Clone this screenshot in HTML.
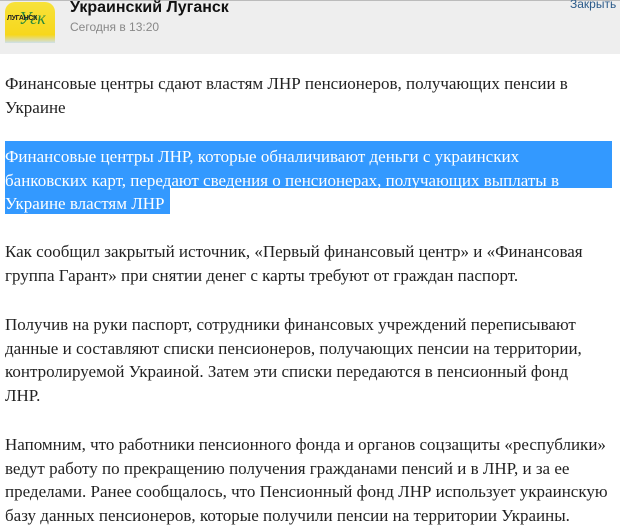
<!DOCTYPE html>
<html><head><meta charset="utf-8"><style>
body{margin:0;width:620px;height:532px;overflow:hidden;background:#fff;position:relative}
.hdr{position:absolute;left:0;top:0;width:620px;height:54px;background:#eeeeee;border-top:1px solid #bbb;box-sizing:border-box}
.logo{position:absolute;left:5px;top:2px;width:50px;height:41px;background:linear-gradient(#f7e23a 0,#f7d71c 80%,#cfe0ea 100%);border-radius:10px 10px 0 0;overflow:hidden}
.logo .t{position:absolute;left:2px;top:13px;font:bold 7px "Liberation Sans",sans-serif;color:#222;letter-spacing:-0.3px}
.logo .s{position:absolute;left:14px;top:6px;font:italic 18px "Liberation Serif",serif;color:#2a8a3a}
.name{position:absolute;left:70px;top:-1px;font:bold 16px "Liberation Sans",sans-serif;color:#111}
.date{position:absolute;left:70px;top:20px;font:12px "Liberation Sans",sans-serif;color:#888}
.close{position:absolute;left:570px;top:-3px;font:12px "Liberation Sans",sans-serif;color:#2a5a8a}
.p{position:absolute;left:5px;font:17px "Liberation Serif",serif;line-height:23.5px;color:#222;white-space:nowrap}
.hl1{position:absolute;left:5px;top:141px;width:607px;height:47px;background:#3399ff}
.hl2{position:absolute;left:5px;top:188px;width:165px;height:26px;background:#3399ff}
.w{color:#fff}
</style></head><body>
<div class="hdr"></div>
<div class="logo"><span class="s">Угк</span><span class="t">ЛУГАНСК</span></div>
<div class="name">Украинский Луганск</div>
<div class="date">Сегодня в 13:20</div>
<div class="close">Закрыть</div>
<div class="hl1"></div><div class="hl2"></div>
<div class="p" style="top:72px">Финансовые центры сдают властям ЛНР пенсионеров, получающих пенсии в<br>Украине</div>
<div class="p w" style="top:145px">Финансовые центры ЛНР, которые обналичивают деньги с украинских<br>банковских карт, передают сведения о пенсионерах, получающих выплаты в<br>Украине властям ЛНР</div>
<div class="p" style="top:240px">Как сообщил закрытый источник, «Первый финансовый центр» и «Финансовая<br>группа Гарант» при снятии денег с карты требуют от граждан паспорт.</div>
<div class="p" style="top:313px">Получив на руки паспорт, сотрудники финансовых учреждений переписывают<br>данные и составляют списки пенсионеров, получающих пенсии на территории,<br>контролируемой Украиной. Затем эти списки передаются в пенсионный фонд<br>ЛНР.</div>
<div class="p" style="top:433px">Напомним, что работники пенсионного фонда и органов соцзащиты «республики»<br>ведут работу по прекращению получения гражданами пенсий и в ЛНР, и за ее<br>пределами. Ранее сообщалось, что Пенсионный фонд ЛНР использует украинскую<br>базу данных пенсионеров, которые получили пенсии на территории Украины.</div>
</body></html>
